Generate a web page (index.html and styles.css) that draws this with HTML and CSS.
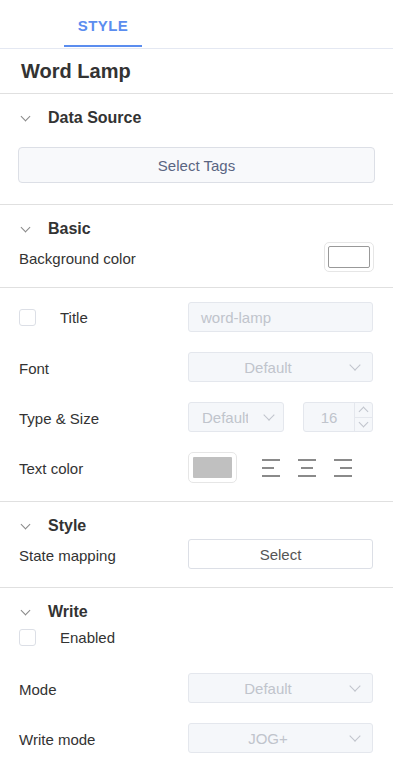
FILE: index.html
```html
<!DOCTYPE html>
<html lang="en">
<head>
  <meta charset="UTF-8" />
  <meta name="viewport" content="width=device-width, initial-scale=1.0"/>
  <title>Word Lamp - Style</title>
  <link rel="stylesheet" href="styles.css">
</head>
<body>

<div class="tabs">
  <div class="tab active">STYLE</div>
</div>

<div class="panel-title">Word Lamp</div>

<!-- data source -->
<div class="section sec-data">
  <div class="sec-head"><span class="arrow"></span>Data Source</div>
  <div class="tags-btn">Select Tags</div>
</div>

<!-- basic -->
<div class="section sec-basic">
  <div class="sec-head"><span class="arrow"></span>Basic</div>
  <div class="row">
    <span class="label">Background color</span>
    <div class="swatch-bg"><span></span></div>
  </div>
</div>

<!-- title / font -->
<div class="section sec-title">
  <div class="row">
    <label class="check"><span class="box"></span>Title</label>
    <div class="ctrl input">word-lamp</div>
  </div>
  <div class="row">
    <span class="label">Font</span>
    <div class="ctrl select">Default<span class="caret"></span></div>
  </div>
  <div class="row">
    <span class="label">Type &amp; Size</span>
    <div class="ctrl-pair">
      <div class="ctrl select small"><span class="val">Default</span><span class="caret"></span></div>
      <div class="ctrl number">
        <span class="num">16</span>
        <div class="spin">
          <span class="up"></span>
          <span class="down"></span>
        </div>
      </div>
    </div>
  </div>
  <div class="row">
    <span class="label">Text color</span>
    <div class="ctrl-pair start">
      <div class="swatch-text"><span></span></div>
      <div class="aligns">
        <span class="align left"><i></i><i></i><i></i></span>
        <span class="align center"><i></i><i></i><i></i></span>
        <span class="align right"><i></i><i></i><i></i></span>
      </div>
    </div>
  </div>
</div>

<!-- style -->
<div class="section sec-style">
  <div class="sec-head"><span class="arrow"></span>Style</div>
  <div class="row">
    <span class="label">State mapping</span>
    <div class="ctrl btn">Select</div>
  </div>
</div>

<!-- write -->
<div class="section sec-write">
  <div class="sec-head"><span class="arrow"></span>Write</div>
  <label class="check enabled"><span class="box"></span>Enabled</label>
  <div class="row">
    <span class="label">Mode</span>
    <div class="ctrl select">Default<span class="caret"></span></div>
  </div>
  <div class="row">
    <span class="label">Write mode</span>
    <div class="ctrl select">JOG+<span class="caret"></span></div>
  </div>
</div>

</body>
</html>
```

FILE: styles.css
```css
* {
  box-sizing: border-box;
}
body {
  margin: 0;
  background: #fff;
  color: #333;
  font-family: "Liberation Sans", Arial, sans-serif;
  font-size: 15px;
}
.tabs {
  height: 49px;
  border-bottom: 1px solid #e4e8f2;
  padding-left: 64px;
}
.tab {
  width: 78px;
  height: 48px;
  padding-top: 17px;
  text-align: center;
  font-size: 15px;
  font-weight: bold;
  color: #5b8def;
  letter-spacing: 0.4px;
}
.tab.active {
  border-bottom: 2px solid #5b8def;
  height: 47px;
}
.panel-title {
  height: 45px;
  padding: 11px 0 0 21px;
  font-size: 20px;
  font-weight: bold;
  color: #333;
  border-bottom: 1px solid #e0e0e0;
}
.section {
  border-bottom: 1px solid #e0e0e0;
  padding: 0 20px 0 19px;
}
.sec-head {
  height: 34px;
  padding-top: 14px;
  font-size: 16px;
  font-weight: bold;
  line-height: 18px;
  display: flex;
  align-items: center;
}
.arrow {
  width: 7px;
  height: 7px;
  border-right: 1px solid #888;
  border-bottom: 1px solid #888;
  transform: rotate(45deg);
  margin: -4px 19px 0 3px;
}
.sec-data {
  height: 111px;
}
.tags-btn {
  margin: 19px -2px 0 -1px;
  height: 36px;
  border: 1px solid #dcdfe6;
  border-radius: 4px;
  background: #f8f9fb;
  color: #5a6582;
  display: flex;
  align-items: center;
  justify-content: center;
}
.row {
  height: 30px;
  display: flex;
  align-items: center;
  justify-content: space-between;
}
.label {
  padding-top: 2px;
}
.sec-basic {
  height: 83px;
}
.sec-basic .row {
  margin-top: 3px;
  margin-right: -1px;
}
.swatch-bg {
  width: 50px;
  height: 30px;
  border: 1px solid #e6e6e6;
  border-radius: 5px;
  padding: 3px;
}
.swatch-bg span {
  display: block;
  height: 100%;
  border: 1px solid #999;
  border-radius: 2px;
  background: #fff;
}
.sec-title {
  padding-top: 14px;
  height: 214px;
}
.sec-title .row + .row {
  margin-top: 20px;
}
.check {
  display: flex;
  align-items: center;
  color: #333;
}
.check .box {
  width: 17px;
  height: 17px;
  border: 1px solid #dcdfe6;
  border-radius: 3px;
  margin-right: 24px;
}
.ctrl {
  width: 185px;
  height: 30px;
  border: 1px solid #e4e7ed;
  border-radius: 3px;
  background: #f5f7fa;
  color: #c0c4cc;
  display: flex;
  align-items: center;
  position: relative;
}
.input {
  padding-left: 12px;
}
.select {
  justify-content: center;
  padding-right: 25px;
}
.caret {
  position: absolute;
  right: 13px;
  top: 8px;
  width: 8px;
  height: 8px;
  border-right: 1px solid #c0c4cc;
  border-bottom: 1px solid #c0c4cc;
  transform: rotate(45deg);
}
.ctrl-pair {
  width: 185px;
  display: flex;
  justify-content: space-between;
  align-items: center;
}
.ctrl-pair.start {
  justify-content: flex-start;
}
.select.small {
  width: 96px;
  justify-content: flex-start;
  padding: 0 0 0 13px;
}
.select.small .val {
  width: 46px;
  overflow: hidden;
  white-space: nowrap;
}
.select.small .caret {
  right: 10px;
}
.number {
  width: 70px;
}
.number .num {
  flex: 1;
  text-align: center;
}
.spin {
  width: 18px;
  height: 100%;
  border-left: 1px solid #e4e7ed;
  display: flex;
  flex-direction: column;
}
.spin span {
  flex: 1;
  position: relative;
}
.spin .up {
  border-bottom: 1px solid #e4e7ed;
}
.spin span::after {
  content: "";
  position: absolute;
  left: 5px;
  width: 6px;
  height: 6px;
  border-left: 1px solid #c0c4cc;
  border-top: 1px solid #c0c4cc;
}
.spin .up::after {
  top: 5px;
  transform: rotate(45deg);
}
.spin .down::after {
  top: 1px;
  transform: rotate(-135deg);
}
.swatch-text {
  width: 49px;
  height: 31px;
  border: 1px solid #e6e6e6;
  border-radius: 5px;
  padding: 4px;
}
.swatch-text span {
  display: block;
  height: 100%;
  background: #c0c0c0;
  border-radius: 1px;
}
.aligns {
  display: flex;
  gap: 18px;
  margin-left: 25px;
  margin-top: 1px;
}
.align {
  width: 18px;
  display: flex;
  flex-direction: column;
  gap: 6px;
}
.align i {
  display: block;
  height: 2px;
  background: #8a8a8a;
}
.align i:nth-child(2) {
  width: 12px;
}
.align.center i:nth-child(2) {
  align-self: center;
}
.align.right i:nth-child(2) {
  align-self: flex-end;
}
.sec-style {
  height: 86px;
}
.sec-style .row {
  margin-top: 3px;
}
.btn {
  background: #fff;
  border-color: #dcdfe6;
  color: #555;
  justify-content: center;
}
.sec-write {
  border-bottom: none;
}
.check.enabled {
  margin-top: 7px;
}
.sec-write .row {
  margin-top: 27px;
}
.sec-write .row + .row {
  margin-top: 20px;
}
```
